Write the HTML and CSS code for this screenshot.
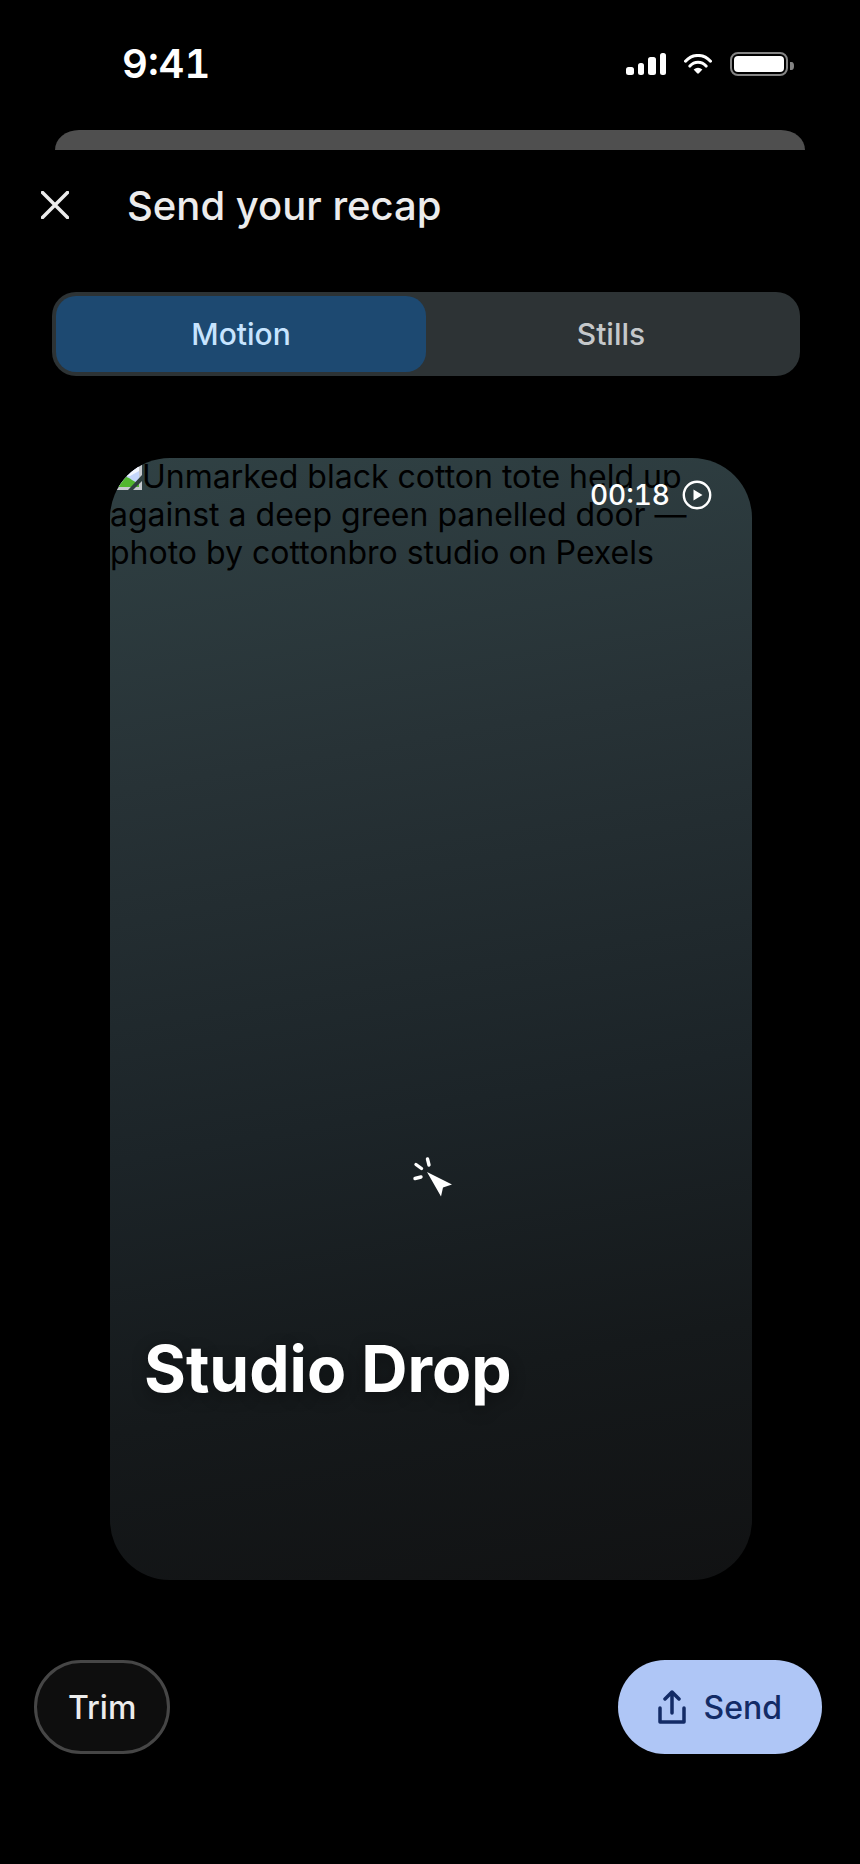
FILE: index.html
```html
<!DOCTYPE html>
<html lang="en">
<head>
<meta charset="utf-8">
<meta name="viewport" content="width=device-width, initial-scale=1">
<title>Send your recap</title>
<link rel="stylesheet" href="styles.css">
</head>
<body>
<div class="screen">
  <div class="status">
    <time class="clock">9:41</time>
    <svg class="signal" viewBox="0 0 40 22" aria-hidden="true">
      <rect x="0" y="14" width="8" height="8" rx="2.5"/>
      <rect x="12" y="10" width="6" height="12" rx="2.5"/>
      <rect x="22" y="4" width="8" height="18" rx="2.5"/>
      <rect x="34" y="0" width="6" height="22" rx="2.5"/>
    </svg>
    <svg class="wifi" viewBox="0 0 28 20" aria-hidden="true">
      <path class="wave" d="M1.5 7.2C8.5-.5 19.5-.5 26.5 7.2M5.9 12.1C10.5 7 17.5 7 22.1 12.1"/>
      <path d="M9.6 15.500Q14 12 18.400 15.500L14.900 19.300Q14 20.200 13.100 19.300Z"/>
    </svg>
    <svg class="battery" viewBox="0 0 64 24" aria-hidden="true">
      <rect class="shell" x="1" y="1" width="56" height="22" rx="7"/>
      <rect x="4" y="4" width="50" height="16" rx="4"/>
      <path class="cap" d="M60 10H61.500Q64 10 64 14T61.500 18H60Z"/>
    </svg>
  </div>
  <div class="sheet-behind"></div>
  <header class="header">
    <button class="close" type="button" aria-label="Close">
      <svg viewBox="0 0 28 28" aria-hidden="true"><path d="M1.500 1.500L26.500 26.500M26.500 1.500L1.500 26.500"/></svg>
    </button>
    <h1 class="title">Send your recap</h1>
  </header>
  <div class="segments" role="tablist">
    <button class="segment segment-on" type="button" role="tab" aria-selected="true">Motion</button>
    <button class="segment" type="button" role="tab" aria-selected="false">Stills</button>
  </div>
  <main class="card">
    <p class="alt"><svg class="broken" viewBox="0 0 32 32" aria-hidden="true">
        <path fill="#c6c9ce" d="M2 0H32V32H2Z"/>
        <path fill="#c5d6fa" d="M4 3H29V29H4Z"/>
        <path fill="#f2f5fc" d="M10 15Q14 9 19 12Q24 6 29 9V13L20 18H10Z"/>
        <path fill="#52b62f" d="M4 29V22Q14 15 22 22L29 26V29Z"/>
        <path fill="#30403f" d="M18 32L32 17V23L23 32Z"/>
      </svg>Unmarked black cotton tote held up against a deep green panelled door — photo by cottonbro studio on Pexels</p>
    <div class="duration">
      <span>00:18</span>
      <svg class="play" viewBox="0 0 30 30" aria-hidden="true"><circle cx="15" cy="15" r="13.200"/><path d="M11.500 9.500V20.500L20.500 15Z"/></svg>
    </div>
    <svg class="pointer" viewBox="0 0 40 42" aria-hidden="true">
      <path class="rays" d="M15.500 3L17 9M4 8.500L9.500 12.500M3 22.500L9 21"/>
      <path d="M15 16L40 28.500L31 31.500L29 40.500Z"/>
    </svg>
    <h2 class="name">Studio Drop</h2>
  </main>
  <footer class="actions">
    <button class="trim" type="button">Trim</button>
    <button class="send" type="button">
      <svg class="share" viewBox="0 0 28 34" aria-hidden="true"><path d="M2 18V32H26V18M14 23V2M7 9L14 2L21 9"/></svg>
      <span>Send</span>
    </button>
  </footer>
</div>
</body>
</html>
```
FILE: styles.css
```css
* { box-sizing: border-box; margin: 0; }

body {
  background: #000;
  color: #ececec;
  font-family: Inter, "Liberation Sans", sans-serif;
  font-size: 32px;
}

button {
  border: 0;
  padding: 0;
  background: none;
  color: inherit;
  font: inherit;
}

svg { flex: none; fill: none; }

.screen {
  display: flex;
  flex-direction: column;
  min-height: 100vh;
}

.status {
  display: flex;
  align-items: center;
  height: 130px;
  padding: 0 66px 2px 122px;
  color: #fff;
}
.status svg { fill: #fff; }
.clock {
  flex: 1;
  padding-bottom: 2px;
  font-size: 40px;
  font-weight: 600;
  font-variant-numeric: tabular-nums;
}
.signal { width: 40px; height: 22px; margin-right: 18px; }
.wifi { width: 28px; height: 20px; margin-right: 18px; }
.status .wave { fill: none; stroke: #fff; stroke-width: 3; stroke-linecap: round; }
.battery { width: 64px; height: 24px; }
.status .shell { fill: none; stroke: #848484; stroke-width: 2; }
.status .cap { fill: #848484; }

.sheet-behind {
  height: 20px;
  margin: 0 55px;
  border-radius: 24px 24px 0 0 / 20px 20px 0 0;
  background: #4f4f4f;
}

.header {
  display: flex;
  align-items: center;
  gap: 58px;
  height: 112px;
  padding: 0 41px 2px;
}
.close { display: flex; }
.close svg { width: 28px; height: 28px; stroke: #ececec; stroke-width: 3.5; stroke-linecap: round; }
.title { font-size: 40px; font-weight: 500; }

.segments {
  display: flex;
  height: 84px;
  margin: 30px 60px 82px 52px;
  padding: 4px;
  border-radius: 24px;
  background: #2d3335;
}
.segment {
  flex: 1;
  border-radius: 20px;
  color: #c5c8ca;
  font-size: 30px;
  font-weight: 500;
}
.segment-on { background: #1d4971; color: #c7e4ff; }

.card {
  position: relative;
  display: flex;
  flex-direction: column;
  aspect-ratio: 642 / 1122;
  margin: 0 108px 80px 110px;
  border-radius: 60px;
  overflow: hidden;
  background: linear-gradient(170deg, #304144 0%, #273236 27%, #1c2428 57%, #15191b 79%, #111213 100%);
}
.alt {
  color: #000;
  line-height: 38px;
}
.broken { width: 32px; height: 32px; vertical-align: -2px; }
.duration {
  position: absolute;
  top: 20px;
  right: 40px;
  display: flex;
  align-items: center;
  gap: 12px;
  color: #fff;
  font-size: 28px;
  font-weight: 500;
  font-variant-numeric: tabular-nums;
}
.play { width: 30px; height: 30px; fill: #fff; }
.play circle { fill: none; stroke: #fff; stroke-width: 2.4; }
.pointer {
  position: absolute;
  left: 302px;
  top: 698px;
  width: 40px;
  height: 42px;
  fill: #fff;
}
.rays { stroke: #fff; stroke-width: 3.4; stroke-linecap: round; }
.name {
  margin-top: auto;
  padding: 0 34px 172px;
  color: #fff;
  font-size: 64px;
  font-weight: 700;
  line-height: 78px;
  text-shadow: 0 4px 16px rgba(0, 0, 0, 0.4);
}

.actions {
  display: flex;
  justify-content: space-between;
  padding: 0 38px 110px 34px;
}
.trim, .send {
  display: flex;
  align-items: center;
  height: 94px;
  border-radius: 47px;
  font-weight: 500;
}
.trim {
  padding: 0 31px;
  border: 3px solid #464646;
  background: #0e0e0e;
}
.send {
  gap: 18px;
  padding: 0 40px;
  background: #afc6f6;
  color: #132b66;
}
.share {
  width: 28px;
  height: 34px;
  stroke: #132b66;
  stroke-width: 3.5;
  stroke-linecap: round;
  stroke-linejoin: round;
}
```
